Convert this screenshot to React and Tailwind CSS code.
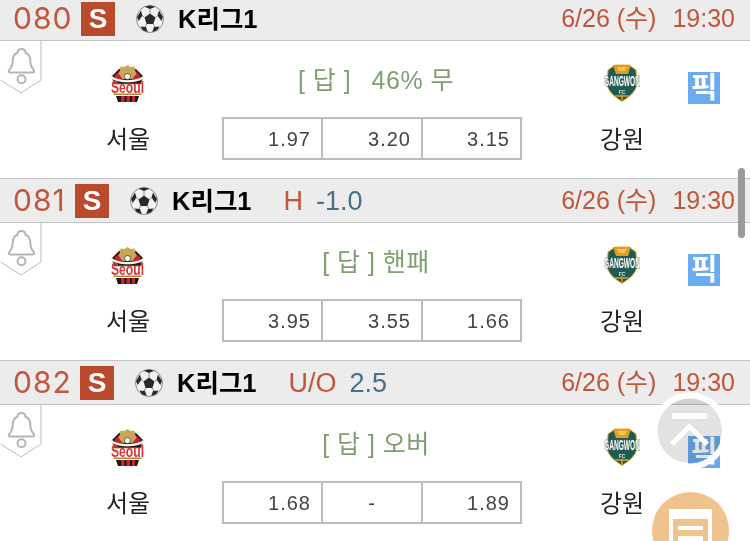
const matches = [
  { no: "080", noWidth: "w-[68px]", extra: null, pick: "[ 답 ]  \u200946% 무", odds: ["1.97", "3.20", "3.15"] },
  { no: "081", noWidth: "w-[62px]", extra: ["H", "-1.0"], pick: "[ 답 ] 핸패", odds: ["3.95", "3.55", "1.66"] },
  { no: "082", noWidth: "w-[67px]", extra: ["U/O", "2.5"], pick: "[ 답 ] 오버", odds: ["1.68", "-", "1.89"] },
];

function Ball() {
  return (
    <svg width="28" height="28" viewBox="0 0 28 28" className="shrink-0">
      <circle cx="14" cy="14" r="13.500" fill="#f2f2f2" stroke="#8a8a8a" />
      <path d="M14 8.500l5.500 4-2.100 6.500h-6.800l-2.100-6.500z" fill="#2a2a2a" />
      <path d="M8.500 1.800L14 4l5.500-2.200L14 .5zM1 12l4-6.500 1.500 5-3.800 5.500zM27 12l-4-6.500-1.500 5 3.800 5.500z" fill="#2a2a2a" />
      <path d="M4.500 21.500l5.500.5 1.800 5-5-1.800zM23.500 21.500l-5.500.5-1.800 5 5-1.800z" fill="#2a2a2a" />
      <path d="M14 8.500V4M19.500 12.500l2.500-2M8.500 12.500l-2.500-2M17.400 19l1.500 3M10.600 19l-1.500 3" stroke="#888" strokeWidth="1" />
    </svg>
  );
}

function Bell() {
  return (
    <svg width="42" height="54" viewBox="0 0 42 54" className="absolute left-0 top-0">
      <path d="M41 0V39L21 52 .5 39" fill="#fff" stroke="#bdbdbd" strokeWidth="1" />
      <path d="M21.500 8c-2.600 0-4 1.800-4 3.800-3.300 1.300-4.800 4.200-4.800 8 0 4-1.300 6.800-3.300 9-1 1.200-.5 2.700 1 2.700h22.200c1.500 0 2-1.500 1-2.700-2-2.200-3.300-5-3.300-9 0-3.800-1.500-6.700-4.800-8 0-2-1.400-3.800-4-3.800z" fill="none" stroke="#b5b5b5" strokeWidth="2" />
      <circle cx="21.500" cy="38.300" r="4" fill="none" stroke="#b5b5b5" strokeWidth="2" />
    </svg>
  );
}

function SeoulLogo() {
  return (
    <svg width="33" height="37" viewBox="0 0 33 37">
      <path d="M8 4L25 4 32 11 30 19H3L1 11z" fill="#2e1a10" stroke="#b08a2c" strokeWidth=".8" />
      <path d="M4 10l6-5 1 10H3zM29 10l-6-5-1 10h8z" fill="#c4262e" />
      <path d="M16.500 0l3 2 4-.5.5 4 1.500 3-4 5.500h-10l-4-5.500L9 5.500l.5-4 4 .5z" fill="#c9a758" />
      <circle cx="16.500" cy="11.500" r="3" fill="#fff" stroke="#222" strokeWidth=".7" />
      <path d="M1 11c5 5.500 26 5.500 31 0v2.500c-5 5-26 5-31 0z" fill="#fff" />
      <text transform="translate(16.500 28) scale(.76 1)" textAnchor="middle" fontSize="16" fontWeight="700" fontFamily="Liberation Sans" fill="#d8343f">Seoul</text>
      <path d="M2 28.500h29l-1 1.500H3z" fill="#b08a2c" />
      <path d="M5 31h23l-2 6H7z" fill="#1d1512" />
      <path d="M10 31h3.500v6H10zM15.500 31H19v6h-3.500zM21 31h3v6h-3z" fill="#c4262e" />
    </svg>
  );
}

function GangwonLogo() {
  return (
    <svg width="38" height="38" viewBox="0 0 38 38">
      <path d="M5 6L12 1 26 1 33 6 34 20C33 28 26 33 19 37.500 12 33 5 28 4 20z" fill="#1d5c55" stroke="#e8b32e" />
      <path d="M10 1h18l-3 9H13z" fill="#e39a25" />
      <path d="M14 3h10l-2 4h-6z" fill="#f3c65a" />
      <text transform="translate(19 22) scale(.47 1)" textAnchor="middle" fontSize="14" fontWeight="700" fontFamily="Liberation Sans" fill="#fff" stroke="#44605b" strokeWidth="1" paintOrder="stroke">GANGWON</text>
      <text x="19" y="30" textAnchor="middle" fontSize="5" fontWeight="700" fontFamily="Liberation Sans" fill="#d8e4e0">FC</text>
      <path d="M12 32h14M19 30.500v6" stroke="#e39a25" strokeWidth="1.500" />
    </svg>
  );
}

function MatchRow({ m }) {
  return (
    <div className="relative">
      <div className="flex h-[45px] items-center border-y border-[#c4c4c4] bg-[#ececec] pl-[13px] pr-[15px]">
        <span className={`${m.noWidth} font-['Inter'] text-[30px] tracking-[1px] text-[#c0563a]`}>{m.no}</span>
        <span className="flex h-[34px] w-[34px] items-center justify-center bg-[#b94a2c] text-[28px] font-bold text-white">S</span>
        <span className="ml-[21px]"><Ball /></span>
        <span className="ml-[14px] pt-[1px] text-[25.500px] font-bold text-black">K리그1</span>
        {m.extra && (
          <span className="ml-[32px] pt-[1px] text-[27px] text-[#c0563a]">{m.extra[0]}</span>
        )}
        {m.extra && (
          <span className="ml-[13px] pt-[1px] text-[27px] text-[#4a7088]">{m.extra[1]}</span>
        )}
        <span className="ml-auto flex gap-[16px] pt-[1px] text-[25px] text-[#c0563a]">
          <span>6/26 (수)</span>
          <span>19:30</span>
        </span>
      </div>
      <div className="relative h-[136px] bg-white">
        <Bell />
        <div className="flex h-[76px] items-start">
          <div className="flex w-[222px] justify-center pl-[33px] pt-[24px]"><SeoulLogo /></div>
          <div className="w-[308px] whitespace-pre pt-[21px] text-center text-[25px] tracking-[.5px] text-[#7f9f70]">{m.pick}</div>
          <div className="ml-[26px] flex w-[132px] justify-center pt-[23px]"><GangwonLogo /></div>
          <div className="mt-[31px] flex h-[32px] w-[32px] items-center justify-center bg-[#6aaaf0] text-[29px] font-bold leading-none text-white">픽</div>
        </div>
        <div className="flex items-center">
          <div className="w-[222px] pl-[34px] pt-[2px] text-center text-[24px] text-[#222]">서울</div>
          <div className="grid h-[43px] w-[300px] grid-cols-[97px_100px_99px] border-2 border-[#bdbdbd]">
            {m.odds.map((o, i) => (
              <div
                key={i}
                className={`flex items-center text-[20px] tracking-[1px] text-[#444] ${o === "-" ? "justify-center" : "justify-end pr-[10px]"} ${i > 0 ? "border-l-2 border-[#bdbdbd]" : ""}`}
              >
                {o}
              </div>
            ))}
          </div>
          <div className="w-[200px] pt-[2px] text-center text-[24px] text-[#222]">강원</div>
        </div>
      </div>
    </div>
  );
}

export default function App() {
  return (
    <div className="relative h-[541px] w-[750px] overflow-hidden bg-white font-['Liberation_Sans','Noto_Sans_CJK_KR',sans-serif]">
      <div className="-mt-[4px] flex flex-col gap-[1px]">
        {matches.map((m) => (
          <MatchRow key={m.no} m={m} />
        ))}
      </div>

      {/* scrollbar */}
      <div className="absolute right-[5px] top-[168px] h-[70px] w-[7px] rounded-full bg-[#9a9a9a]" />

      {/* scroll to top */}
      <div className="absolute left-[657px] top-[398px] h-[65px] w-[65px] rounded-full bg-[#e2e2e2] mix-blend-multiply" />
      <svg width="78" height="78" viewBox="0 0 78 78" className="absolute left-[651px] top-[392px]">
        <circle cx="39" cy="39" r="35.500" fill="none" stroke="#fff" strokeWidth="6" />
        <path d="M21 21h35v6H21zM38.500 31L19 50.500l3.500 3.500 16-16 16 16 3.500-3.500z" fill="#fff" />
      </svg>

      {/* list button */}
      <div className="absolute left-[652px] top-[492px] h-[77px] w-[77px] rounded-full bg-[#efc38d]">
        <svg width="77" height="77" viewBox="0 0 77 77">
          <path d="M17 17h43v60H17z" fill="#fff" />
          <path d="M21 27h35v50H21z" fill="#efc38d" />
          <path d="M26 34h25v4H26zM26 44h25v5H26z" fill="#fff" />
        </svg>
      </div>
    </div>
  );
}
